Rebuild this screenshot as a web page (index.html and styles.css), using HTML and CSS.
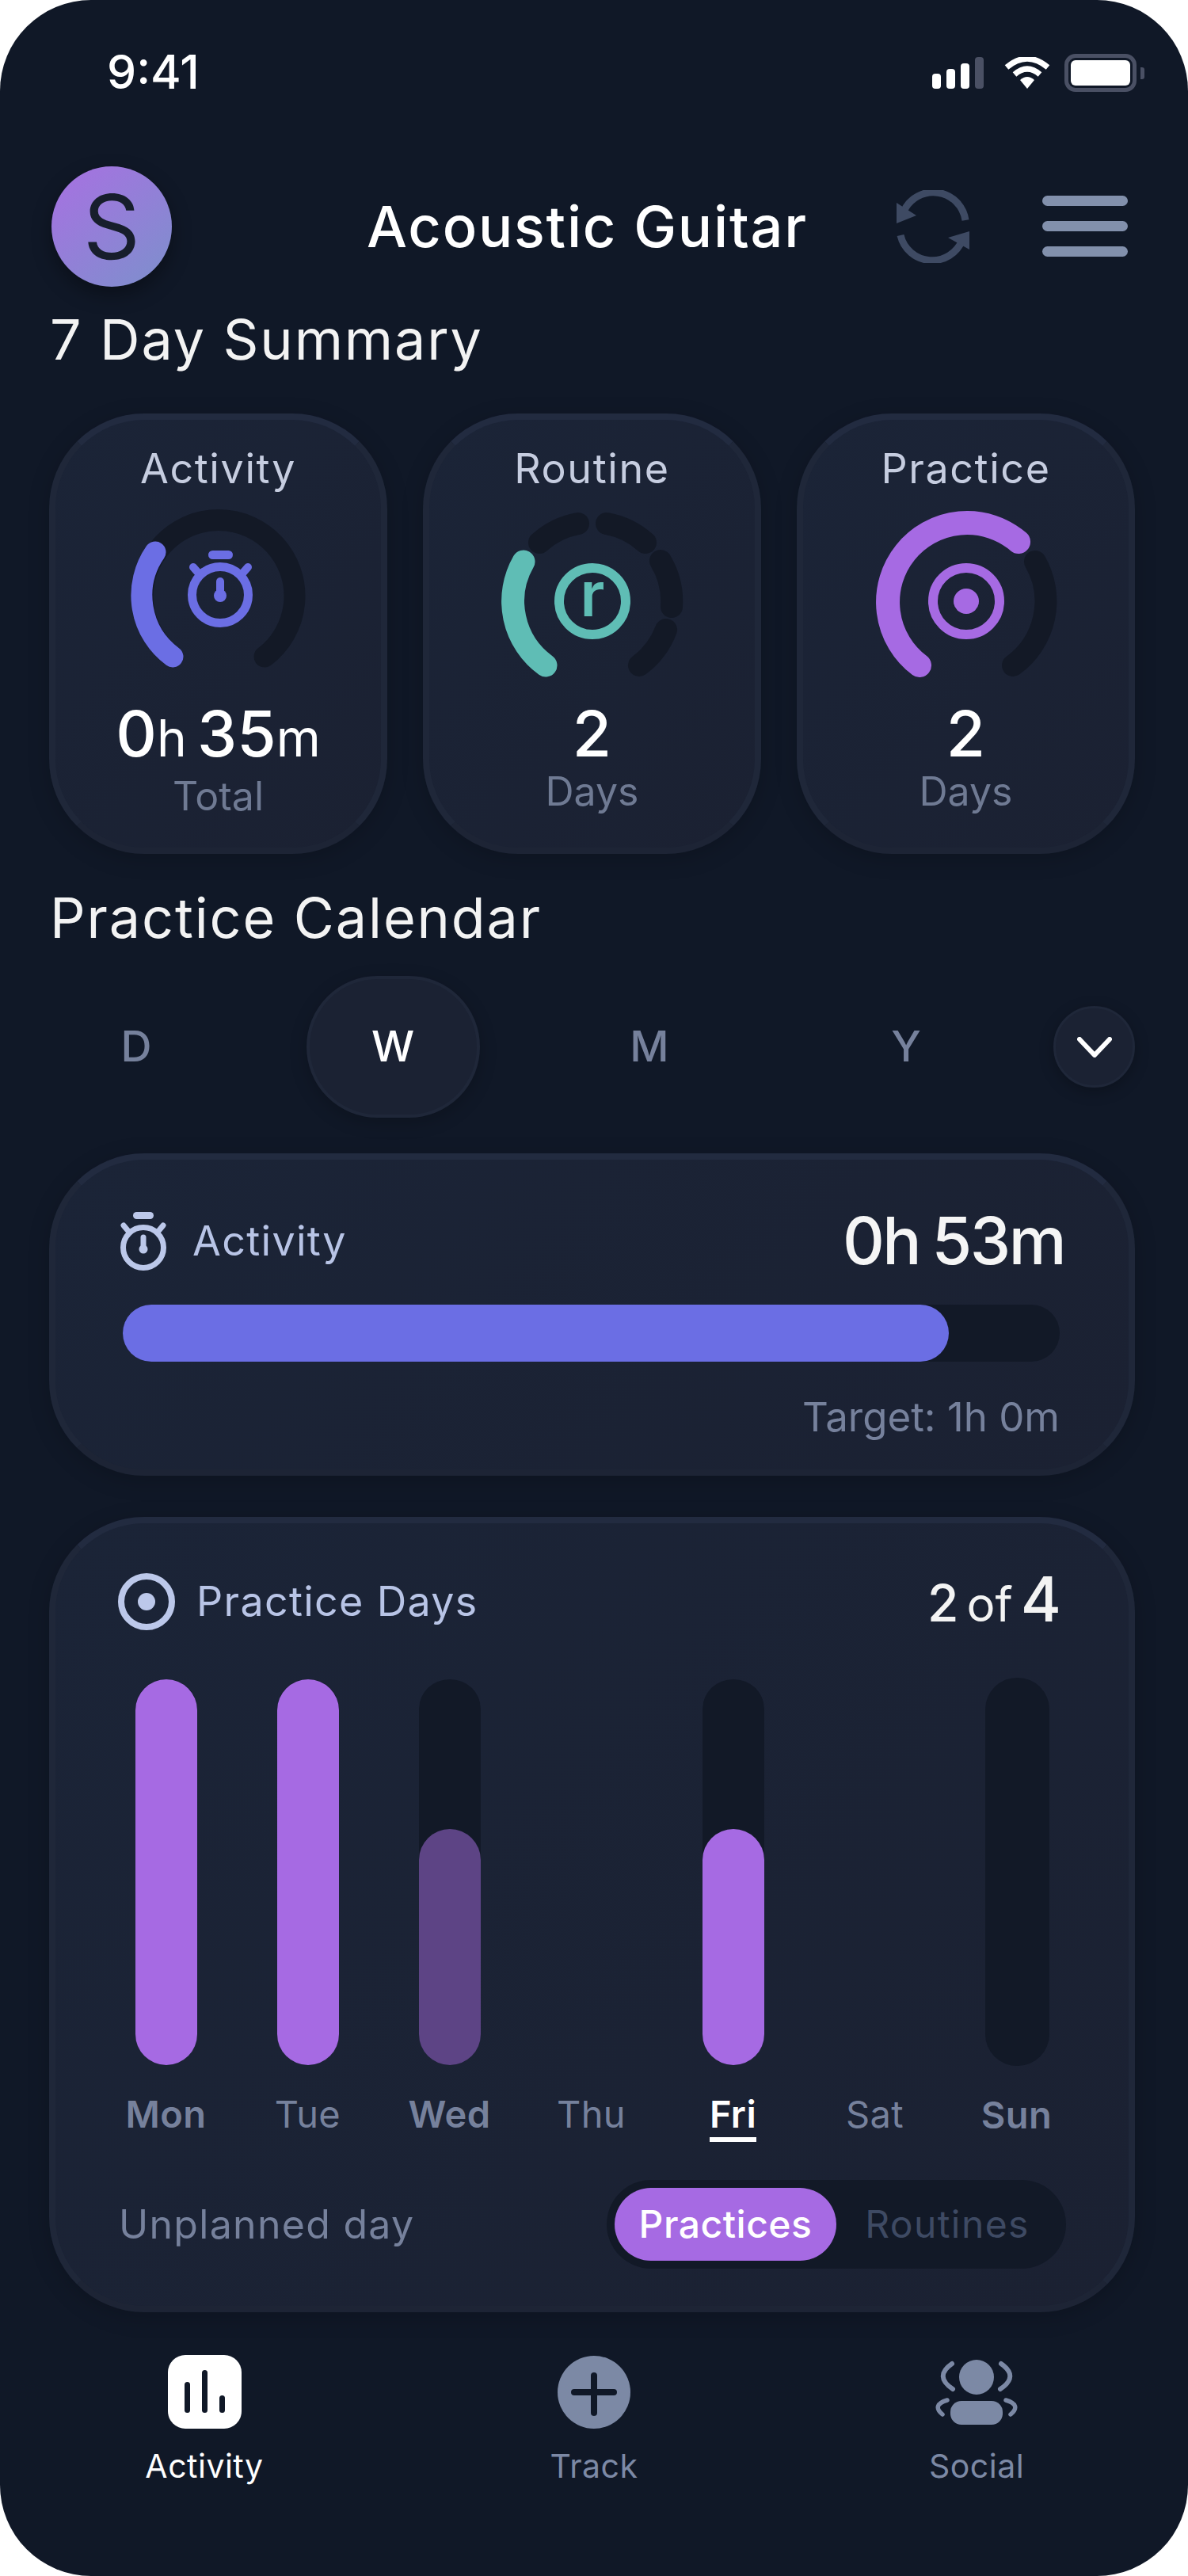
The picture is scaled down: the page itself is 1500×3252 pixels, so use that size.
FILE: index.html
```html
<!DOCTYPE html>
<html lang="en">

    <head>
        <meta charset="UTF-8">
        <meta name="viewport" content="width=device-width, initial-scale=1.0">
        <link rel="stylesheet" href="styles.css">
        <title>Acoustic Guitar</title>
    </head>

    <body>
        <div class="phone">
            <div class="status">
                <span class="time">9:41</span>
                <div class="status-icons">
                    <div class="signal">
                        <i class="sig1"></i><i class="sig2"></i><i class="sig3"></i><i class="sig4"></i>
                    </div>
                    <svg class="wifi" width="58" height="40" viewBox="0 0 58 40">
                        <path d="M3 13Q29-9 55 13" fill="none" stroke="#fff" stroke-width="7"/>
                        <path d="M13 22Q29 8 45 22" fill="none" stroke="#fff" stroke-width="7"/>
                        <path d="M20 29Q29 21 38 29L29 40Z" fill="#fff"/>
                    </svg>
                    <div class="battery"><div class="battery-level"></div></div>
                    <div class="battery-nub"></div>
                </div>
            </div>

            <div class="header">
                <div class="avatar">S</div>
                <div class="title">Acoustic Guitar</div>
                <div class="actions">
                    <svg width="92" height="92" viewBox="0 0 92 92">
                        <path d="M87 38A41 41 0 0 0 9 27" fill="none" stroke="#3e4a63" stroke-width="9"/>
                        <path d="M5 57A41 41 0 0 0 83 63" fill="none" stroke="#3e4a63" stroke-width="9"/>
                        <polygon points="0,16 25,32 0,42" fill="#3e4a63"/>
                        <polygon points="92,52 65,60 92,75" fill="#3e4a63"/>
                    </svg>
                    <div class="menu"><i></i><i></i><i></i></div>
                </div>
            </div>

            <h2 class="section-title summary-title">7 Day Summary</h2>

            <div class="summary">
                <div class="card stat">
                    <div class="stat-name">Activity</div>
                    <svg class="ring" width="240" height="240" viewBox="0 0 240 240">
                        <path d="M62 198A96 96 0 1 1 178 198" fill="none" stroke="#131926" stroke-width="27" stroke-linecap="round"/>
                        <path d="M62 198A96 96 0 0 1 40 66" fill="none" stroke="#6b6ee4" stroke-width="27" stroke-linecap="round"/>
                        <circle cx="122" cy="120" r="35.500" fill="none" stroke="#6b6ee4" stroke-width="11"/>
                        <rect x="107" y="64" width="31" height="11" rx="5.500" fill="#6b6ee4"/>
                        <path d="M88 85L95 93M157 85L150 93" stroke="#6b6ee4" stroke-width="10" stroke-linecap="round"/>
                        <path d="M122 103V120" stroke="#6b6ee4" stroke-width="10" stroke-linecap="round"/>
                        <circle cx="122" cy="121" r="8" fill="#6b6ee4"/>
                    </svg>
                    <div class="stat-value"><span>0</span><small>h</small> <span>35</span><small>m</small></div>
                    <div class="stat-sub stat-sub-total">Total</div>
                </div>

                <div class="card stat">
                    <div class="stat-name">Routine</div>
                    <svg class="ring" width="240" height="240" viewBox="0 0 240 240">
                        <g fill="none" stroke="#131926" stroke-width="28" stroke-linecap="round">
                            <path d="M53 54A100 100 0 0 1 102 30"/>
                            <path d="M138 30A100 100 0 0 1 187 54"/>
                            <path d="M206 77A100 100 0 0 1 220 135"/>
                            <path d="M213 164A100 100 0 0 1 179 209"/>
                        </g>
                        <path d="M61 209A100 100 0 0 1 33 78" fill="none" stroke="#5fbdb5" stroke-width="29" stroke-linecap="round"/>
                        <circle cx="120" cy="128" r="42" fill="none" stroke="#5fbdb5" stroke-width="12"/>
                        <text class="ring-letter" x="120" y="147" text-anchor="middle">r</text>
                    </svg>
                    <div class="stat-value">2</div>
                    <div class="stat-sub">Days</div>
                </div>

                <div class="card stat">
                    <div class="stat-name">Practice</div>
                    <svg class="ring" width="240" height="240" viewBox="0 0 240 240">
                        <path d="M207 78A100 100 0 0 1 179 209" fill="none" stroke="#131926" stroke-width="28" stroke-linecap="round"/>
                        <path d="M61 209A100 100 0 1 1 186 53" fill="none" stroke="#a66ae3" stroke-width="30" stroke-linecap="round"/>
                        <circle cx="120" cy="128" r="42" fill="none" stroke="#a66ae3" stroke-width="12"/>
                        <circle cx="120" cy="128" r="16" fill="#a66ae3"/>
                    </svg>
                    <div class="stat-value">2</div>
                    <div class="stat-sub">Days</div>
                </div>
            </div>

            <h2 class="section-title calendar-title">Practice Calendar</h2>

            <div class="tabs">
                <div class="tab">D</div>
                <div class="tab tab-active">W</div>
                <div class="tab">M</div>
                <div class="tab">Y</div>
                <div class="tab-more">
                    <svg width="44" height="26" viewBox="0 0 44 26">
                        <path d="M3 3L22 23L41 3" fill="none" stroke="#fff" stroke-width="6" stroke-linecap="round" stroke-linejoin="round"/>
                    </svg>
                </div>
            </div>

            <div class="card activity">
                <div class="panel-head">
                    <div class="panel-name">
                        <svg width="64" height="76" viewBox="0 0 64 76">
                            <circle cx="32" cy="47" r="25.500" fill="none" stroke="#bcc8ea" stroke-width="7"/>
                            <rect x="19" y="2" width="26" height="9" rx="4.500" fill="#bcc8ea"/>
                            <path d="M7 19L12 25M57 19L52 25" stroke="#bcc8ea" stroke-width="7" stroke-linecap="round"/>
                            <path d="M32 34V48" stroke="#bcc8ea" stroke-width="7" stroke-linecap="round"/>
                            <circle cx="32" cy="49" r="5.500" fill="#bcc8ea"/>
                        </svg>
                        <span>Activity</span>
                    </div>
                    <div class="panel-total">0h 53m</div>
                </div>
                <div class="progress"><div class="progress-fill"></div></div>
                <div class="target">Target: 1h 0m</div>
            </div>

            <div class="card days">
                <div class="days-head">
                    <div class="panel-name">
                        <svg width="72" height="72" viewBox="0 0 72 72">
                            <circle cx="36" cy="36" r="32" fill="none" stroke="#bcc8ea" stroke-width="8"/>
                            <circle cx="36" cy="36" r="11" fill="#bcc8ea"/>
                        </svg>
                        <span>Practice Days</span>
                    </div>
                    <div class="days-count">2 <small>of</small> <b>4</b></div>
                </div>

                <div class="chart">
                    <div class="day">
                        <div class="bar"><div class="fill fill-full"></div></div>
                        <div class="day-label strong"><span>Mon</span></div>
                    </div>
                    <div class="day">
                        <div class="bar"><div class="fill fill-full"></div></div>
                        <div class="day-label"><span>Tue</span></div>
                    </div>
                    <div class="day">
                        <div class="bar"><div class="fill fill-part fill-dim"></div></div>
                        <div class="day-label strong"><span>Wed</span></div>
                    </div>
                    <div class="day">
                        <div class="bar bar-none"></div>
                        <div class="day-label"><span>Thu</span></div>
                    </div>
                    <div class="day">
                        <div class="bar"><div class="fill fill-part"></div></div>
                        <div class="day-label strong today"><span>Fri</span></div>
                    </div>
                    <div class="day">
                        <div class="bar bar-none"></div>
                        <div class="day-label"><span>Sat</span></div>
                    </div>
                    <div class="day">
                        <div class="bar bar-wide"></div>
                        <div class="day-label strong"><span>Sun</span></div>
                    </div>
                </div>

                <div class="days-foot">
                    <span class="unplanned">Unplanned day</span>
                    <div class="toggle">
                        <div class="toggle-item toggle-on">Practices</div>
                        <div class="toggle-item">Routines</div>
                    </div>
                </div>
            </div>

            <div class="nav">
                <div class="nav-item nav-on">
                    <div class="nav-icon">
                        <div class="chart-icon"><i class="b1"></i><i class="b2"></i><i class="b3"></i></div>
                    </div>
                    <span>Activity</span>
                </div>
                <div class="nav-item">
                    <div class="nav-icon">
                        <svg width="94" height="94" viewBox="0 0 94 94">
                            <circle cx="47" cy="47" r="46" fill="#7c89a5"/>
                            <path d="M47 26V73M22 47H72" stroke="#101827" stroke-width="8" stroke-linecap="round"/>
                        </svg>
                    </div>
                    <span>Track</span>
                </div>
                <div class="nav-item">
                    <div class="nav-icon">
                        <svg width="108" height="92" viewBox="0 0 108 92">
                            <circle cx="54" cy="27" r="22" fill="#7c89a5"/>
                            <rect x="21" y="57" width="66" height="30" rx="14" fill="#7c89a5"/>
                            <path d="M23 10Q0 26 24 42M85 10Q108 26 84 42" fill="none" stroke="#7c89a5" stroke-width="6" stroke-linecap="round"/>
                            <path d="M17 56Q-3 62 11 74M91 56Q111 62 97 74" fill="none" stroke="#7c89a5" stroke-width="5.500" stroke-linecap="round"/>
                        </svg>
                    </div>
                    <span>Social</span>
                </div>
            </div>
        </div>
    </body>
</html>
```

FILE: styles.css
```css
* {
    box-sizing: border-box;
}

body {
    margin: 0;
    background-color: #fff;
    font-family: Inter, "Noto Sans", sans-serif;
}

.phone {
    width: 1500px;
    height: 3252px;
    background-color: #101827;
    border-radius: 115px;
    overflow: hidden;
}

/* status bar */
.status {
    display: flex;
    justify-content: space-between;
    height: 209px;
    padding: 56px 55px 0 135px;
}

.time {
    font-size: 59px;
    font-weight: 500;
    line-height: 70px;
    color: #fff;
}

.status-icons {
    display: flex;
    align-items: center;
    height: 72px;
}

.signal {
    display: flex;
    align-items: flex-end;
    gap: 7px;
    height: 40px;
}

.signal i {
    width: 11px;
    border-radius: 4px;
    background-color: #fff;
}

.sig1 { height: 19px; }
.sig2 { height: 25px; }
.sig3 { height: 32px; }
.signal .sig4 { height: 40px; background-color: #4a5064; }

.wifi {
    margin-left: 26px;
}

.battery {
    width: 91px;
    height: 48px;
    margin-left: 18px;
    padding: 3px;
    border: 5px solid #4a5064;
    border-radius: 14px;
}

.battery-level {
    height: 100%;
    background-color: #fff;
    border-radius: 6px;
}

.battery-nub {
    width: 5px;
    height: 15px;
    margin-left: 5px;
    background-color: #4a5064;
    border-radius: 0 3px 3px 0;
}

/* header */
.header {
    display: flex;
    align-items: center;
    height: 153px;
    padding: 0 76px 0 65px;
}

.avatar {
    width: 152px;
    height: 152px;
    border-radius: 50%;
    background: linear-gradient(140deg, #a870e2, #7c90cc);
    box-shadow: 0 10px 24px rgba(0, 0, 0, 0.35);
    color: #171e2c;
    font-size: 112px;
    line-height: 152px;
    text-align: center;
}

.title {
    margin-left: 246px;
    font-size: 72px;
    font-weight: 500;
    letter-spacing: 1.800px;
    color: #fff;
    white-space: nowrap;
}

.actions {
    display: flex;
    align-items: center;
    gap: 92px;
    margin-left: auto;
}

.menu {
    display: flex;
    flex-direction: column;
    gap: 19px;
    width: 108px;
}

.menu i {
    height: 13px;
    border-radius: 7px;
    background-color: #8290ac;
}

/* section titles */
.section-title {
    margin: 0;
    padding-left: 63px;
    font-size: 70px;
    font-weight: 400;
    line-height: 86px;
    letter-spacing: 1.900px;
    color: #f3f3f3;
}

.summary-title {
    margin-top: 24px;
}

.calendar-title {
    margin-top: 38px;
}

/* cards */
.card {
    background: linear-gradient(135deg, #1b2437, #1b2132);
    border: 8px solid #1f2739;
    border-top-color: #222b40;
    border-bottom-color: #1d2435;
    border-radius: 120px;
    box-shadow: 0 6px 28px rgba(0, 0, 0, 0.18);
}

.summary {
    display: grid;
    grid-template-columns: repeat(3, 427px);
    gap: 45px;
    margin: 50px 0 0 62px;
}

.stat {
    display: flex;
    flex-direction: column;
    align-items: center;
    height: 556px;
    padding-top: 32px;
}

.stat-name {
    font-size: 52px;
    line-height: 60px;
    letter-spacing: 1.600px;
    color: #c6cde0;
}

.ring {
    margin-top: 9px;
}

.ring-letter {
    font-size: 78px;
    font-weight: 600;
    fill: #5fbdb5;
}

.stat-value {
    margin-top: 12px;
    font-size: 80px;
    font-weight: 500;
    line-height: 86px;
    word-spacing: -8px;
    color: #fff;
}

.stat-value small {
    font-size: 64px;
    font-weight: 400;
}

.stat-sub {
    margin-top: 2px;
    font-size: 50px;
    line-height: 56px;
    color: #6f7a93;
}

/* range tabs */
.tabs {
    display: grid;
    grid-template-columns: 324px 324px 324px 324px 103px;
    align-items: center;
    margin: 30px 0 0 10px;
}

.tab {
    justify-self: center;
    width: 219px;
    height: 179px;
    font-size: 54px;
    font-weight: 500;
    line-height: 177px;
    text-align: center;
    color: #76819c;
}

.tab-active {
    background-color: #1b2233;
    border: 4px solid #1f2739;
    border-radius: 90px;
    box-shadow: 0 6px 22px rgba(0, 0, 0, 0.2);
    line-height: 169px;
    color: #fff;
}

.tab-more {
    display: flex;
    align-items: center;
    justify-content: center;
    width: 103px;
    height: 103px;
    margin-left: 24px;
    background-color: #1b2233;
    border: 3px solid #1f2739;
    border-radius: 50%;
    box-shadow: 0 5px 18px rgba(0, 0, 0, 0.25);
}

/* activity panel */
.activity {
    height: 407px;
    margin: 45px 67px 0 62px;
    padding: 64px 87px 0 85px;
}

.panel-head {
    display: flex;
    align-items: center;
    justify-content: space-between;
    height: 76px;
}

.panel-name {
    display: flex;
    align-items: center;
    font-size: 52px;
    letter-spacing: 1.300px;
    color: #b8c4e6;
}

.activity .panel-name {
    margin-left: -6px;
}

.activity .panel-name span {
    margin-left: 30px;
}

.panel-total {
    margin-right: -6px;
    font-size: 82px;
    font-weight: 500;
    letter-spacing: -2.500px;
    word-spacing: -4px;
    color: #f5f5f5;
}

.progress {
    height: 72px;
    margin-top: 43px;
    background-color: #121927;
    border-radius: 36px;
}

.progress-fill {
    width: 1043px;
    height: 72px;
    background-color: #6b6ee4;
    border-radius: 36px;
}

.target {
    margin-top: 40px;
    font-size: 51px;
    line-height: 60px;
    text-align: right;
    color: #76819c;
}

/* practice days panel */
.days {
    height: 1004px;
    margin: 52px 67px 0 62px;
    padding: 62px 52px 0 50px;
}

.days-head {
    display: flex;
    align-items: center;
    justify-content: space-between;
    height: 73px;
    margin: 0 33px 0 29px;
}

.days .panel-name span {
    margin-left: 27px;
}

.days-count {
    font-size: 64px;
    font-weight: 500;
    line-height: 73px;
    word-spacing: -7px;
    color: #f3f3f3;
}

.days-count small {
    font-size: 60px;
    font-weight: 400;
}

.days-count b {
    font-size: 78px;
    font-weight: 500;
}

.chart {
    display: grid;
    grid-template-columns: repeat(7, 179px);
    margin-top: 60px;
}

.day {
    display: flex;
    flex-direction: column;
    align-items: center;
}

.bar {
    display: flex;
    flex-direction: column;
    justify-content: flex-end;
    width: 78px;
    height: 489px;
    border-top: 2px solid transparent;
    background-clip: padding-box;
    background-color: #121927;
    border-radius: 39px;
}

.bar-wide {
    width: 81px;
    height: 490px;
    margin-left: 2px;
    border-top: 0;
    border-radius: 40px;
}

.bar-none {
    background-color: transparent;
}

.fill {
    background-color: #a66ae3;
    border-radius: 39px;
}

.fill-full {
    height: 100%;
}

.fill-part {
    height: 298px;
}

.fill-dim {
    background-color: #5d4485;
}

.day-label {
    height: 64px;
    margin-top: 33px;
    font-size: 47px;
    line-height: 58px;
    letter-spacing: 0.400px;
    color: #76819c;
}

.day-label span {
    display: inline-block;
}

.strong {
    font-weight: 600;
}

.today {
    color: #fff;
}

.today span {
    border-bottom: 6px solid #fff;
}

.days-foot {
    display: flex;
    align-items: center;
    justify-content: space-between;
    margin: 47px 27px 0 30px;
}

.unplanned {
    font-size: 50px;
    letter-spacing: 1.300px;
    color: #76819c;
}

.toggle {
    display: flex;
    width: 580px;
    height: 112px;
    padding: 10px;
    background-color: #121927;
    border-radius: 56px;
}

.toggle-item {
    width: 280px;
    font-size: 48px;
    line-height: 92px;
    letter-spacing: 1.400px;
    text-align: center;
    color: #3e4a63;
}

.toggle-on {
    background-color: #a66ae3;
    border-radius: 46px;
    font-weight: 500;
    letter-spacing: 0.500px;
    color: #fff;
}

/* bottom nav */
.nav {
    display: grid;
    grid-template-columns: 492px 483px 200px;
    margin-top: 53px;
    padding-left: 158px;
}

.nav-item {
    display: flex;
    flex-direction: column;
    align-items: center;
    width: 200px;
    font-size: 41px;
    line-height: 50px;
    letter-spacing: 0.500px;
    color: #7c89a5;
}

.nav-on {
    color: #fff;
}

.nav-icon {
    display: flex;
    align-items: center;
    justify-content: center;
    height: 95px;
    margin-bottom: 21px;
}

.chart-icon {
    display: flex;
    align-items: flex-end;
    justify-content: center;
    gap: 15px;
    width: 93px;
    height: 93px;
    padding-bottom: 20px;
    background-color: #fff;
    border-radius: 22px;
}

.chart-icon i {
    width: 7px;
    border-radius: 4px;
    background-color: #101827;
}

.b1 { height: 39px; }
.b2 { height: 54px; }
.b3 { height: 22px; }
```
